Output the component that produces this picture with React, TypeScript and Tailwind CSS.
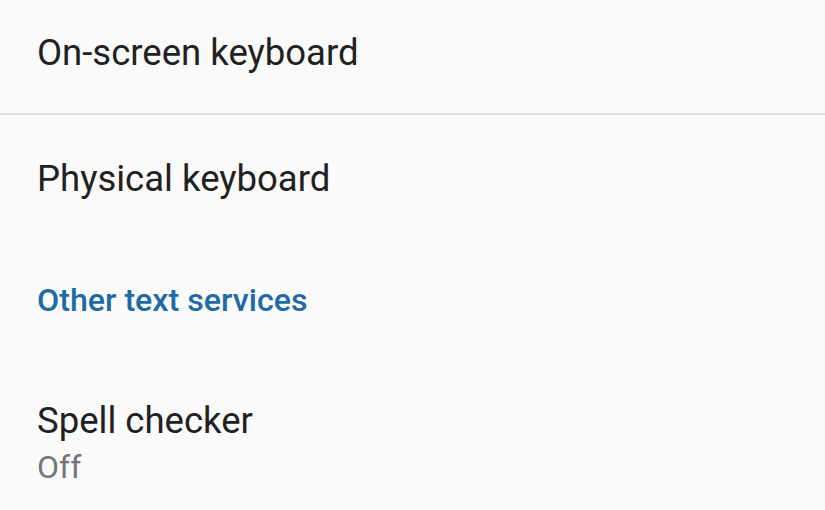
import React from 'react'

const font = { fontFamily: 'Roboto, "Noto Sans", sans-serif' }

export default function App() {
  return (
    <div className="w-[825px] h-[510px] overflow-hidden bg-[#fafafa]" style={font}>
      {/* On-screen keyboard */}
      <div className="pl-[37px] pt-[35px] pb-[42px] border-b-2 border-[#e0e0e0]">
        <p className="text-[36.5px] leading-[36px] text-[#212121]">On-screen keyboard</p>
      </div>

      <div className="pl-[37px] pt-[46px]">
        <p className="text-[36.5px] leading-[36px] text-[#212121]">Physical keyboard</p>
      </div>

      {/* Section header */}
      <div className="pl-[37px] mt-[87px]">
        <p className="text-[32.2px] leading-[32px] font-medium text-[#1f6aa5]">Other text services</p>
      </div>

      <div className="pl-[37px] mt-[87px]">
        <p className="text-[36.5px] leading-[36px] text-[#212121]">Spell checker</p>
        <p className="mt-[12px] text-[32px] leading-[32px] text-[#757575]">Off</p>
      </div>
    </div>
  )
}
